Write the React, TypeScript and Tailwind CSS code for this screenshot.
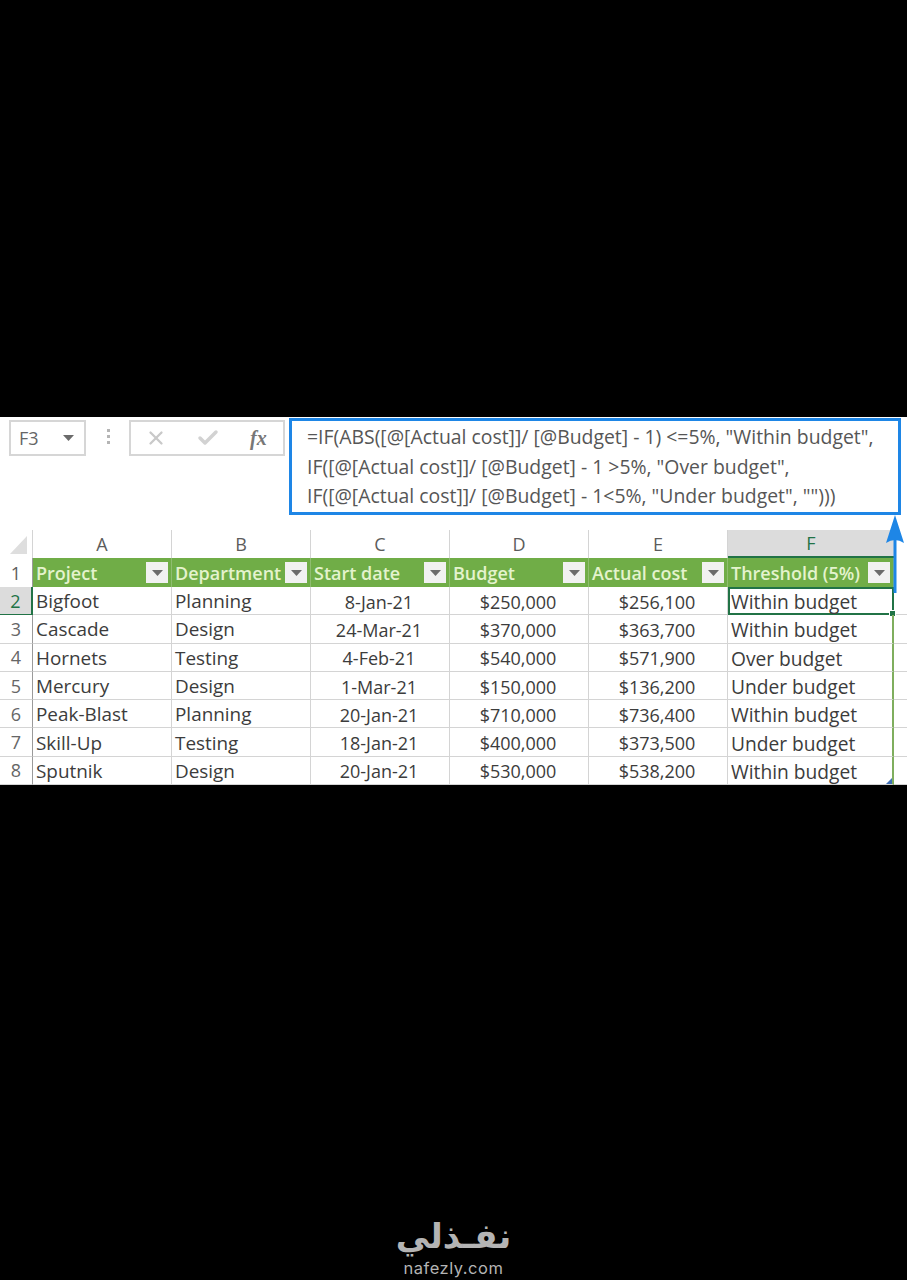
import { Check, X } from "lucide-react";

const columns = ["A", "B", "C", "D", "E", "F"];

const headers = ["Project", "Department", "Start date", "Budget", "Actual cost", "Threshold (5%)"];

const rows = [
  ["Bigfoot", "Planning", "8-Jan-21", "$250,000", "$256,100", "Within budget"],
  ["Cascade", "Design", "24-Mar-21", "$370,000", "$363,700", "Within budget"],
  ["Hornets", "Testing", "4-Feb-21", "$540,000", "$571,900", "Over budget"],
  ["Mercury", "Design", "1-Mar-21", "$150,000", "$136,200", "Under budget"],
  ["Peak-Blast", "Planning", "20-Jan-21", "$710,000", "$736,400", "Within budget"],
  ["Skill-Up", "Testing", "18-Jan-21", "$400,000", "$373,500", "Under budget"],
  ["Sputnik", "Design", "20-Jan-21", "$530,000", "$538,200", "Within budget"],
];

const Caret = () => (
  <svg width="11" height="6" viewBox="0 0 11 6">
    <polygon points="0,0 11,0 5.5,6" fill="#6b6b6b" />
  </svg>
);

const FormulaBar = () => (
  <div className="flex h-[113px] items-start">
    <div className="mt-[3px] ml-[9px] flex h-[36px] w-[77px] items-center justify-between border-2 border-[#d6d6d6] pl-[8px] pr-[10px] text-[18px] text-[#666]">
      <span>F3</span>
      <Caret />
    </div>
    <div className="mt-[12px] ml-[21px] flex w-[4px] flex-col gap-[3px]">
      <span className="h-[3px] w-[3px] bg-[#b5b5b5]" />
      <span className="h-[3px] w-[3px] bg-[#b5b5b5]" />
      <span className="h-[3px] w-[3px] bg-[#b5b5b5]" />
    </div>
    <div className="mt-[3px] ml-[18px] flex h-[36px] w-[156px] items-center border-2 border-[#d6d6d6] pl-[14px]">
      <X className="h-[22px] w-[22px] text-[#c9c9c9]" strokeWidth={2.5} />
      <Check className="ml-[29px] h-[24px] w-[24px] text-[#d2d2d2]" strokeWidth={3.5} />
      <span className="ml-[30px] font-['Liberation_Serif'] text-[20px] font-bold italic leading-none text-[#777]">
        fx
      </span>
    </div>
    <div className="mt-px ml-[4px] h-[97px] w-[612px] border-[3px] border-[#1e86e6] pt-px pl-[15px] text-[19.4px] leading-[29.6px] whitespace-nowrap text-[#565656]">
      <div>=IF(ABS([@[Actual cost]]/ [@Budget] - 1) &lt;=5%, "Within budget",</div>
      <div>IF([@[Actual cost]]/ [@Budget] - 1 &gt;5%, "Over budget",</div>
      <div>IF([@[Actual cost]]/ [@Budget] - 1&lt;5%, "Under budget", "")))</div>
    </div>
  </div>
);

const Sheet = () => (
  <div className="grid grid-cols-[33px_139px_139px_139px_139px_139px_166px_13px] grid-rows-[28px_29px_repeat(7,28.3px)] text-[18px] leading-none text-[#3c3c3c]">
    {/* column letters */}
    <div className="flex items-end justify-end border-r border-[#d4d4d4] pr-[5px] pb-[4px]">
      <svg width="17" height="18" viewBox="0 0 17 18">
        <polygon points="17,0 17,18 0,18" fill="#dedede" />
      </svg>
    </div>
    {columns.map((col) => (
      <div
        key={col}
        className={
          col === "F"
            ? "flex items-center justify-center border-b-[2px] border-[#217346] bg-[#dcdcdc] text-[#217346]"
            : "flex items-center justify-center border-r border-[#d4d4d4] text-[#5c5c5c]"
        }
      >
        {col}
      </div>
    ))}
    <div />

    {/* header row */}
    <div className="flex items-center justify-center border-r border-[#9a9a9a] text-[#5c5c5c]">1</div>
    {headers.map((header) => (
      <div
        key={header}
        className="flex items-center justify-between border-r border-[#8fbd70] bg-[#70ad47] pr-[3px] pl-[3px] font-semibold text-[#e4f3cd]"
      >
        <span className="whitespace-nowrap">{header}</span>
        <span className="flex h-[21px] w-[22px] shrink-0 items-center justify-center bg-[#f1f1f1]">
          <Caret />
        </span>
      </div>
    ))}
    <div />

    {/* data rows */}
    {rows.map((row, i) => (
      <div key={row[0]} className="contents">
        <div
          className={
            i === 0
              ? "flex items-center justify-center border-r-2 border-b border-[#217346] bg-[#dcdcdc] text-[#217346]"
              : "flex items-center justify-center border-r border-b border-r-[#9a9a9a] border-b-[#d4d4d4] text-[#666]"
          }
        >
          {i + 2}
        </div>
        {row.map((cell, j) => (
          <div
            key={j}
            className={
              i === 0 && j === 5
                ? "relative flex items-center border-2 border-[#217346] pl-px text-[19.2px]"
                : j === 2 || j === 3 || j === 4
                  ? "flex items-center justify-center border-r border-b border-[#d4d4d4] pt-[2px] pr-[2px]"
                  : j === 5
                    ? "relative flex items-center border-r-2 border-b border-r-[#7fae5e] border-b-[#d4d4d4] pt-[2px] pl-[3px] text-[19.2px]"
                    : "flex items-center border-r border-b border-[#d4d4d4] pt-[2px] pl-[3px] text-[18.9px]"
            }
          >
            {cell}
            {i === 0 && j === 5 && (
              <span className="absolute -right-[4px] -bottom-[4px] h-[7px] w-[7px] border border-white bg-[#217346]" />
            )}
            {i === 6 && j === 5 && (
              <svg className="absolute right-0 bottom-0" width="6" height="6" viewBox="0 0 6 6">
                <polygon points="6,0 6,6 0,6" fill="#3f6fb5" />
              </svg>
            )}
          </div>
        ))}
        <div className="border-b border-[#d4d4d4]" />
      </div>
    ))}
  </div>
);

const App = () => {
  return (
    <div className="flex h-[1280px] w-full flex-col bg-black font-['Open_Sans',sans-serif]">
      <div className="h-[417px]" />
      <section className="relative h-[368px] overflow-hidden bg-white">
        <FormulaBar />
        <Sheet />
        {/* arrow from the formula box down to the F column */}
        <svg className="absolute top-[98px] left-[885px]" width="20" height="78" viewBox="0 0 20 78">
          <path d="M10 0 L19 28 Q10 22 1 28 Z" fill="#1e86e6" />
          <rect x="8.5" y="20" width="3" height="58" fill="#1e86e6" />
        </svg>
      </section>
      <div className="flex flex-1 flex-col items-center justify-end pb-[2px]">
        <div
          dir="rtl"
          className="font-['DejaVu_Sans',sans-serif] text-[34px] leading-[44px] font-bold text-[#b4b4b4]"
        >
          نفـذلي
        </div>
        <div className="font-['Inter',sans-serif] text-[16.5px] leading-[20px] tracking-[0.5px] text-[#b4b4b4]">
          nafezly.com
        </div>
      </div>
    </div>
  );
};

export default App;
